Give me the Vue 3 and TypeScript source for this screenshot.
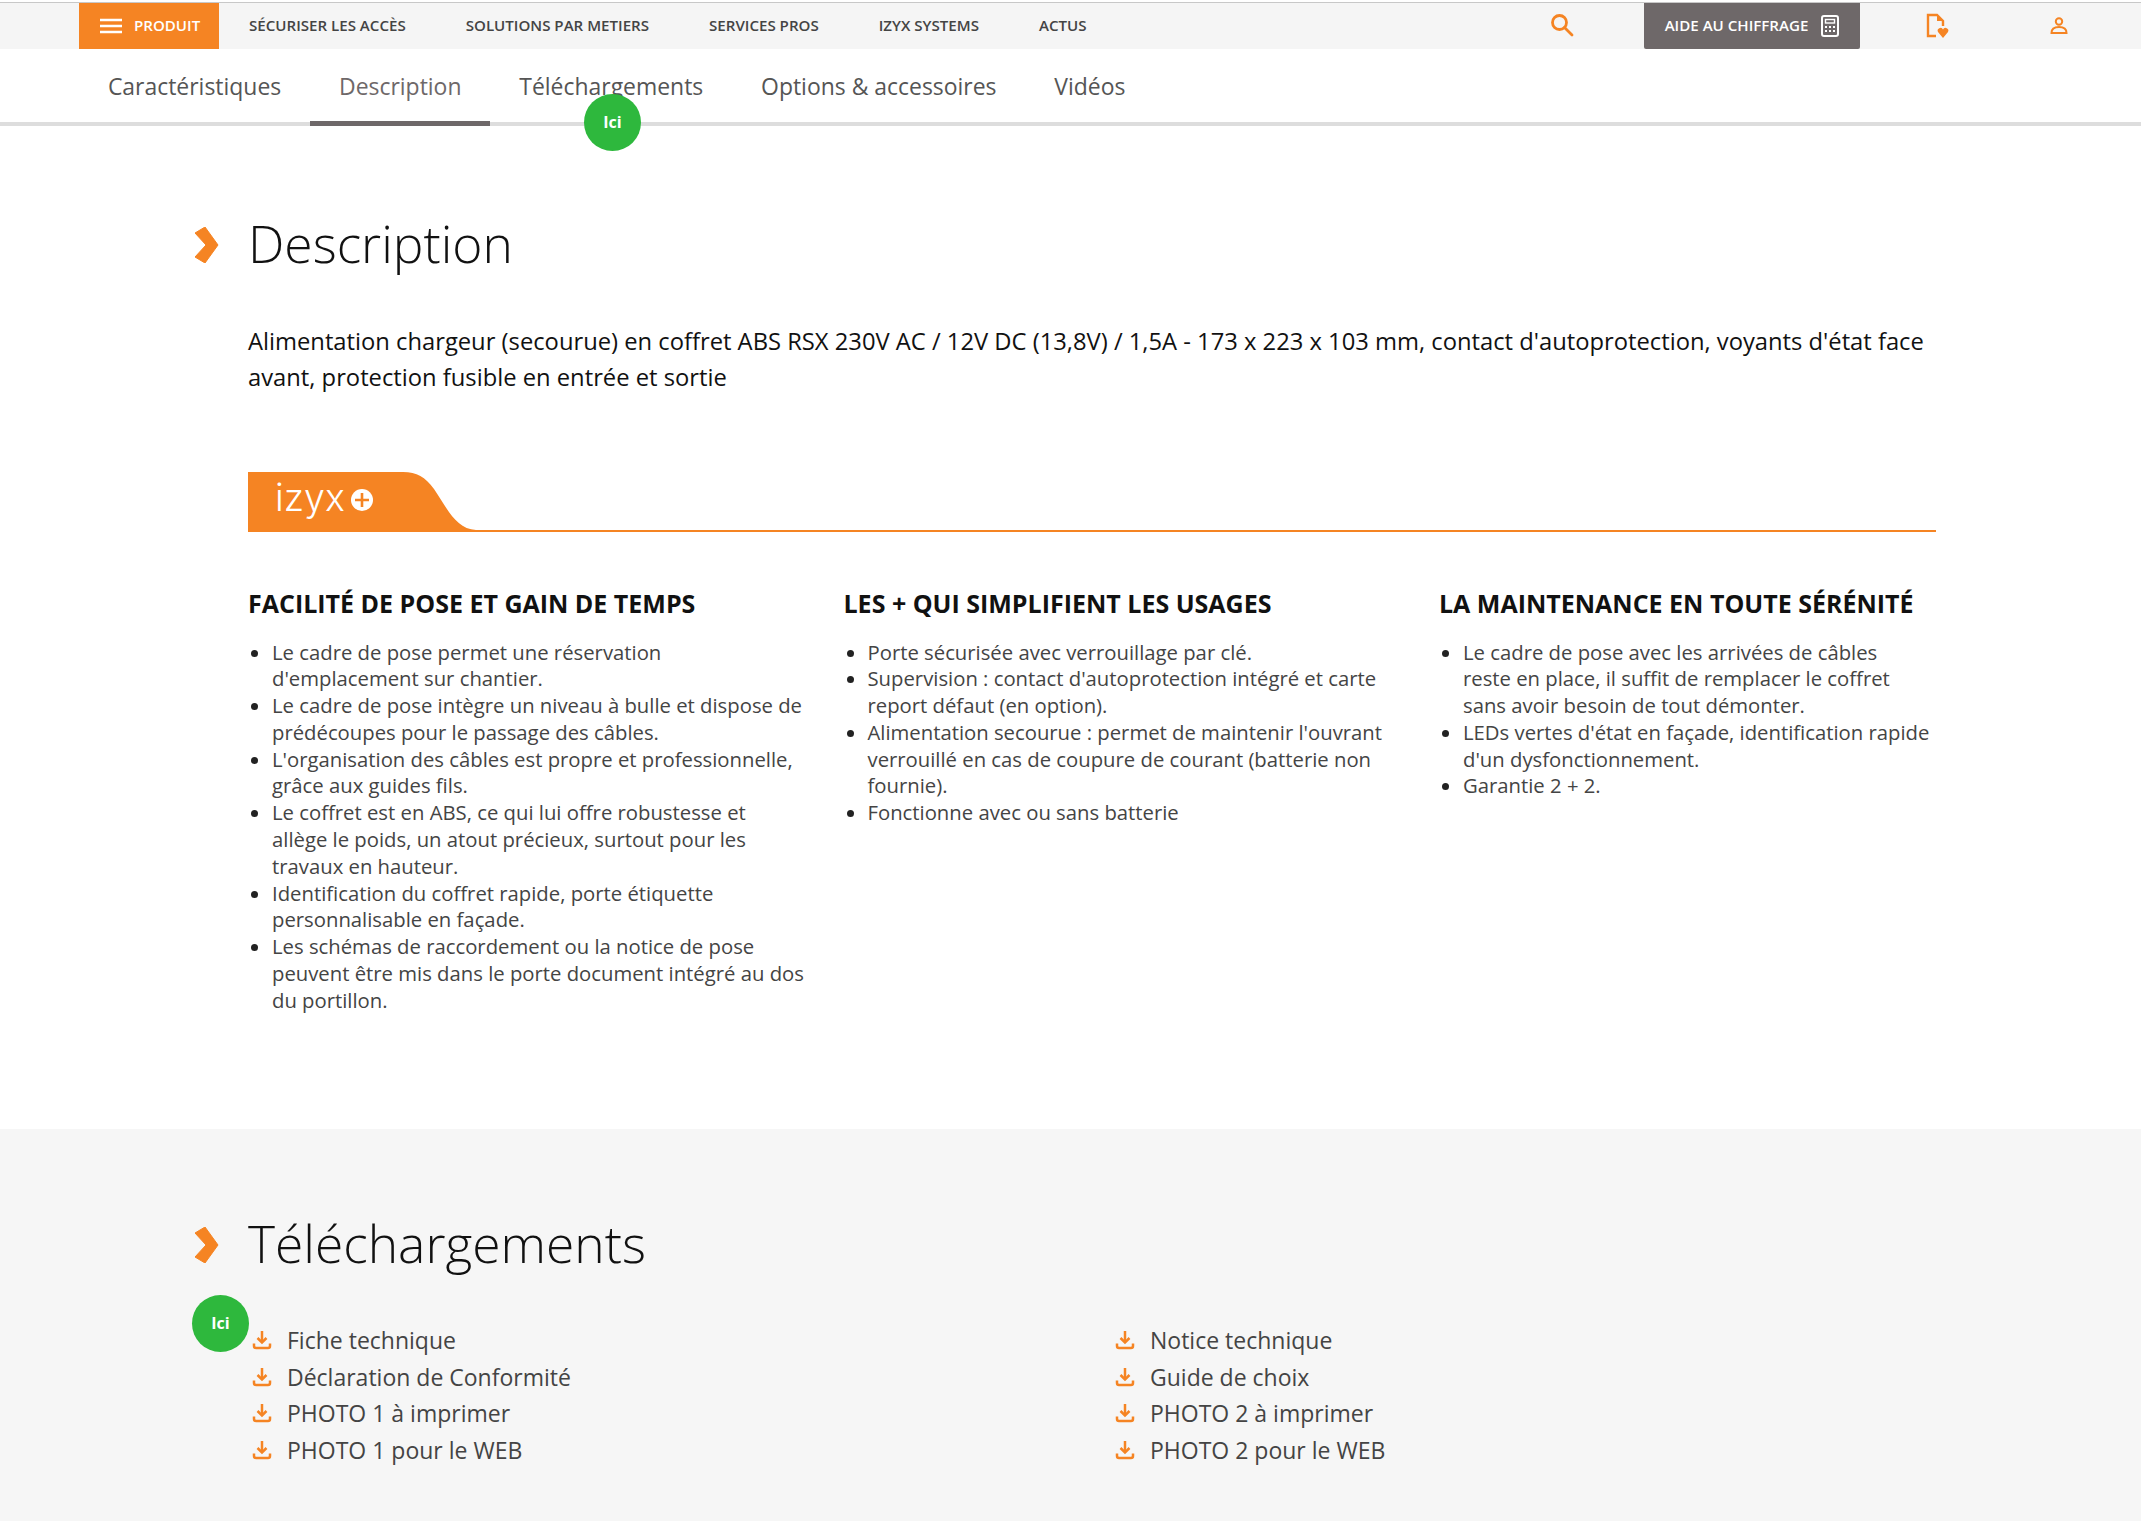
<script setup lang="ts">
const navItems = ["Sécuriser les accès", "Solutions par metiers", "Services pros", "Izyx Systems", "Actus"];
const tabs = ["Caractéristiques", "Description", "Téléchargements", "Options & accessoires", "Vidéos"];
// line breaks are kept in the strings: the fallback font is not the original one
const columns = [
  {
    title: "FACILITÉ DE POSE ET GAIN DE TEMPS",
    items: [
      "Le cadre de pose permet une réservation\nd'emplacement sur chantier.",
      "Le cadre de pose intègre un niveau à bulle et dispose de\nprédécoupes pour le passage des câbles.",
      "L'organisation des câbles est propre et professionnelle,\ngrâce aux guides fils.",
      "Le coffret est en ABS, ce qui lui offre robustesse et\nallège le poids, un atout précieux, surtout pour les\ntravaux en hauteur.",
      "Identification du coffret rapide, porte étiquette\npersonnalisable en façade.",
      "Les schémas de raccordement ou la notice de pose\npeuvent être mis dans le porte document intégré au dos\ndu portillon.",
    ],
  },
  {
    title: "LES + QUI SIMPLIFIENT LES USAGES",
    items: [
      "Porte sécurisée avec verrouillage par clé.",
      "Supervision : contact d'autoprotection intégré et carte\nreport défaut (en option).",
      "Alimentation secourue : permet de maintenir l'ouvrant\nverrouillé en cas de coupure de courant (batterie non\nfournie).",
      "Fonctionne avec ou sans batterie",
    ],
  },
  {
    title: "LA MAINTENANCE EN TOUTE SÉRÉNITÉ",
    items: [
      "Le cadre de pose avec les arrivées de câbles\nreste en place, il suffit de remplacer le coffret\nsans avoir besoin de tout démonter.",
      "LEDs vertes d'état en façade, identification rapide\nd'un dysfonctionnement.",
      "Garantie 2 + 2.",
    ],
  },
];
const downloads = [
  ["Fiche technique", "Déclaration de Conformité", "PHOTO 1 à imprimer", "PHOTO 1 pour le WEB"],
  ["Notice technique", "Guide de choix", "PHOTO 2 à imprimer", "PHOTO 2 pour le WEB"],
];
</script>

<template>
  <div class="page">
    <header class="topbar">
      <a class="burger">
        <svg width="24" height="16" viewBox="0 0 24 16"><path d="M1 2h22M1 8h22M1 14h22" stroke="#fff" stroke-width="2.4" /></svg>
        <span>PRODUIT</span>
      </a>
      <a v-for="item in navItems" :key="item" class="nav-link">{{ item.toUpperCase() }}</a>
      <svg class="search" width="24" height="24" viewBox="0 0 24 24" fill="none" stroke="#f58423" stroke-width="2.8">
        <circle cx="9.5" cy="9.5" r="7" /><path d="M14.500 14.500l7.500 7.500" stroke-linecap="round" />
      </svg>
      <a class="quote">
        <span>AIDE AU CHIFFRAGE</span>
        <svg width="18" height="22" viewBox="0 0 18 22" fill="none">
          <rect x="1" y="1" width="16" height="20" rx="2" stroke="#fff" stroke-width="2" />
          <rect x="4.500" y="4.500" width="9" height="3.500" stroke="#fff" stroke-width="1.400" />
          <path d="M4 12h2M8 12h2M12 12h2M4 16h2M8 16h2M12 16h2" stroke="#fff" stroke-width="2" />
        </svg>
      </a>
      <svg class="file" width="24" height="26" viewBox="0 0 24 26" fill="none">
        <path d="M10 23H2V2h9l6 6v5" stroke="#f58423" stroke-width="2.400" />
        <path d="M11 2v6h6" fill="#f58423" />
        <path d="M17 25l-5-6a2.600 2.600 0 0 1 5-2.500 2.600 2.600 0 0 1 5 2.500z" fill="#f58423" />
      </svg>
      <svg class="user" width="18" height="18" viewBox="0 0 18 18" fill="none" stroke="#f58423" stroke-width="2">
        <circle cx="9" cy="4.500" r="3.200" /><path d="M1.500 16c0-4 3-6 7.500-6s7.500 2 7.500 6z" />
      </svg>
    </header>

    <nav class="tabs">
      <a v-for="tab in tabs" :key="tab" class="tab" :class="{ active: tab === 'Description' }">{{ tab }}</a>
      <span class="pin pin-tab">Ici</span>
    </nav>

    <section class="description">
      <h2 class="heading">
        <svg class="chevron" width="24" height="36" viewBox="0 0 24 36"><path d="M10 0l13 18-13 18-10-6 11-12L0 6z" fill="#f58423" stroke="#f58423" stroke-linejoin="round" /></svg>
        Description
      </h2>
      <p class="lead">
        Alimentation chargeur (secourue) en coffret ABS RSX 230V AC / 12V DC (13,8V) / 1,5A - 173 x 223 x 103 mm, contact d'autoprotection, voyants d'état face avant, protection fusible en entrée et sortie
      </p>
      <div class="brand">
        <svg width="228" height="60" viewBox="0 0 228 60">
          <path d="M0 0h155c14 0 22 5 31 17 12 17 21 40 42 41v2H0z" fill="#f58423" />
          <circle cx="114" cy="28" r="11" fill="#fff" />
          <path d="M114 21v14M107 28h14" stroke="#f58423" stroke-width="2.600" />
        </svg>
        <span class="brand-name">izyx</span>
      </div>
      <div class="columns">
        <div v-for="col in columns" :key="col.title" class="col">
          <h3>{{ col.title }}</h3>
          <ul>
            <li v-for="item in col.items" :key="item">{{ item }}</li>
          </ul>
        </div>
      </div>
    </section>

    <section class="downloads">
      <h2 class="heading">
        <svg class="chevron" width="24" height="36" viewBox="0 0 24 36"><path d="M10 0l13 18-13 18-10-6 11-12L0 6z" fill="#f58423" stroke="#f58423" stroke-linejoin="round" /></svg>
        Téléchargements
      </h2>
      <span class="pin pin-dl">Ici</span>
      <div class="dl-grid">
        <ul v-for="(list, i) in downloads" :key="i" class="dl-list">
          <li v-for="name in list" :key="name">
            <svg width="20" height="20" viewBox="0 0 20 20" fill="none" stroke="#f58423" stroke-width="2.500">
              <path d="M10 1v11" /><path d="M5.500 8l4.500 4.500L14.500 8" />
              <path d="M2 13.500v2.500a2 2 0 0 0 2 2h12a2 2 0 0 0 2-2v-2.500" />
            </svg>
            {{ name }}
          </li>
        </ul>
      </div>
    </section>
  </div>
</template>

<style>
html, body { background: #fff; }
</style>

<style scoped>
.page {
  font-family: "Open Sans", "Noto Sans", sans-serif;
  color: #111;
  width: 2141px;
}
.topbar {
  height: 46px;
  margin-top: 2px;
  border-top: 1px solid #c8c8c8;
  background: #f5f5f5;
  display: flex;
  align-items: center;
  padding-left: 79px;
  font-size: 15.100px;
  font-weight: 600;
  color: #444;
  white-space: nowrap;
}
.burger {
  width: 140px;
  height: 100%;
  flex: none;
  background: #f58423;
  color: #fff;
  display: flex;
  align-items: center;
  gap: 11px;
  padding-left: 20px;
  box-sizing: border-box;
}
.burger span, .nav-link, .quote span { padding-bottom: 2px; }
.nav-link { margin-left: 30px; margin-right: 30px; }
.search { margin-left: auto; margin-right: 70px; flex: none; margin-bottom: 2px; }
.quote {
  width: 216px;
  height: 100%;
  flex: none;
  background: #6e6869;
  color: #fff;
  display: flex;
  align-items: center;
  justify-content: center;
  gap: 13px;
  border-radius: 0 0 2px 2px;
}
.file { margin-left: 66px; flex: none; }
.user { margin-left: 100px; margin-right: 73px; flex: none; }
.tabs {
  position: relative;
  height: 73px;
  display: flex;
  padding-left: 79px;
  border-bottom: 4px solid #ddd;
  font-size: 22.950px;
  color: #555;
}
.tab {
  padding: 0 28.900px;
  height: 72px;
  line-height: 75px;
  flex: none;
  border-bottom: 5px solid transparent;
}
.tab.active { border-bottom-color: #6e6869; color: #6e6869; }
.pin {
  position: absolute;
  width: 57px;
  height: 57px;
  border-radius: 50%;
  background: #2eb83d;
  color: #fff;
  font-size: 16px;
  font-weight: 700;
  text-align: center;
  line-height: 57px;
}
.pin-tab { left: 584px; top: 45px; }
.description { padding: 83px 0 0 248px; height: 1003px; box-sizing: border-box; }
.heading {
  position: relative;
  margin: 0;
  font-size: 51.500px;
  line-height: 68px;
  font-weight: 300;
  color: #111;
}
.chevron { position: absolute; left: -53px; top: 18px; }
.lead {
  margin: 46px 0 0;
  width: 1690px;
  font-size: 23.750px;
  line-height: 36px;
  color: #111;
}
.brand { position: relative; margin-top: 77px; width: 1688px; height: 60px; border-bottom: 2px solid #f58423; box-sizing: border-box; }
.brand svg { display: block; }
.brand-name {
  position: absolute;
  left: 27px;
  top: 4px;
  color: #fff;
  font-family: Inter, sans-serif;
  font-size: 37.500px;
  font-weight: 300;
  line-height: 44px;
}
.columns {
  display: grid;
  grid-template-columns: repeat(3, 565.500px);
  column-gap: 30px;
  margin-top: 55px;
}
.col h3 { margin: 0 0 19.500px; font-size: 25px; line-height: 32px; font-weight: 700; color: #111; white-space: nowrap; }
.col ul { margin: 0; padding-left: 24px; font-size: 20.300px; line-height: 26.800px; color: #444; }
.col li { white-space: pre-line; }
.col li::marker { color: #222; }
.downloads {
  position: relative;
  background: #f6f6f6;
  height: 392px;
  padding: 80px 0 0 248px;
  box-sizing: border-box;
}
.pin-dl { left: 192px; top: 166px; }
.dl-grid { display: flex; margin-top: 45px; }
.dl-list {
  list-style: none;
  margin: 0;
  padding: 0 0 0 4px;
  width: 859px;
  font-size: 23px;
  line-height: 36.600px;
  color: #444;
}
.dl-list li { display: flex; align-items: center; gap: 15px; }
.dl-list svg { flex: none; }
</style>
